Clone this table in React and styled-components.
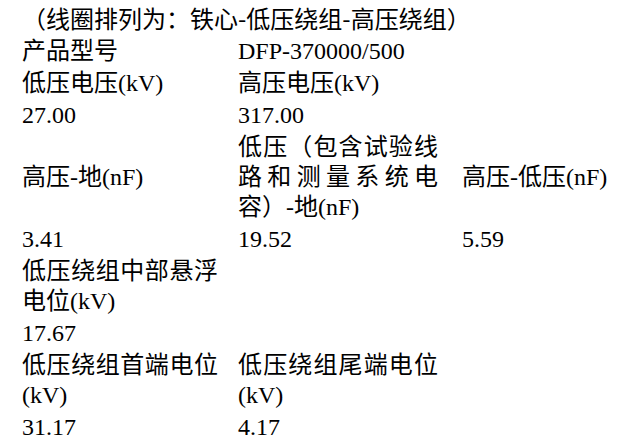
import React from "react";
import styled, { createGlobalStyle } from "styled-components";

const Global = createGlobalStyle`
  html, body { margin: 0; padding: 0; background: #ffffff; }
  body { color: #000000; }
`;

const Page = styled.div`
  padding: 0 0 0 22px;
  width: 625px;
  box-sizing: border-box;
`;

const Table = styled.div`
  display: grid;
  grid-template-columns: 216px 224px 1fr;
  align-items: center;
  font-family: "Liberation Serif", "Noto Sans CJK SC", serif;
  font-size: 24px;
  color: #000;
`;

const Title = styled.div`
  grid-column: 1 / -1;
  font-family: "Noto Sans CJK SC", sans-serif;
  font-size: 24px;
  line-height: 35px;
  padding: 0;
  white-space: nowrap;
`;

const padRight = [20, 24, 0];

const Cell = styled.div`
  line-height: 30px;
  padding: 1px ${(p) => padRight[p.$col]}px 1px 0;
  text-align: justify;
  min-width: 0;
`;

const rows = [
  ["产品型号", "DFP-370000/500", ""],
  ["低压电压(kV)", "高压电压(kV)", ""],
  ["27.00", "317.00", ""],
  ["高压-地(nF)", "低压（包含试验线路和测量系统电容）-地(nF)", "高压-低压(nF)"],
  ["3.41", "19.52", "5.59"],
  ["低压绕组中部悬浮电位(kV)", "", ""],
  ["17.67", "", ""],
  ["低压绕组首端电位(kV)", "低压绕组尾端电位(kV)", ""],
  ["31.17", "4.17", ""],
];

export default function App() {
  return (
    <>
      <Global />
      <Page>
        <Table>
          <Title>（线圈排列为：铁心-低压绕组-高压绕组）</Title>
          {rows.map((row, r) =>
            row.map((text, c) => (
              <Cell key={`${r}-${c}`} $col={c}>
                {text}
              </Cell>
            ))
          )}
        </Table>
      </Page>
    </>
  );
}
